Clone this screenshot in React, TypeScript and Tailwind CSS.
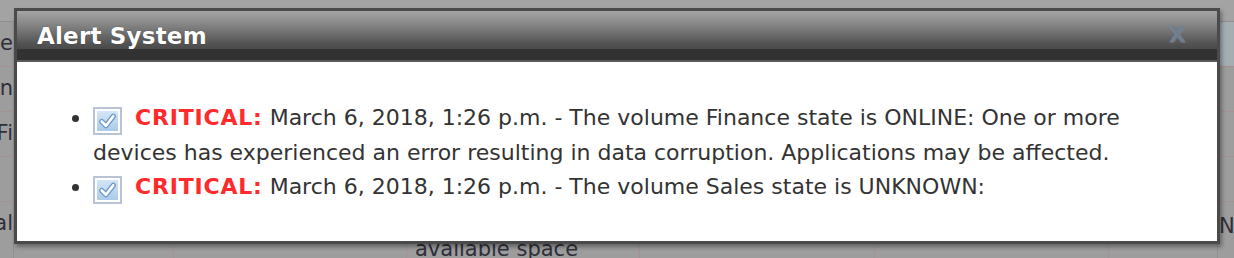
import React from 'react';

type Alert = { id: number; message: string };

const alerts: Alert[] = [
  {
    id: 1,
    message:
      'March 6, 2018, 1:26 p.m. - The volume Finance state is ONLINE: One or more devices has experienced an error resulting in data corruption. Applications may be affected.',
  },
  {
    id: 2,
    message: 'March 6, 2018, 1:26 p.m. - The volume Sales state is UNKNOWN:',
  },
];

function CheckIcon() {
  return (
    <span className="inline-flex align-[-6px] w-[29px] h-[28px] mr-[13px] border-2 border-[#b9c3d3] bg-white p-[2px]">
      <svg viewBox="0 0 20 19" className="w-full h-full">
        <defs>
          <linearGradient id="cbfill" x1="0" y1="0" x2="0" y2="1">
            <stop offset="0" stopColor="#d4e6f6" />
            <stop offset="1" stopColor="#a9cbe9" />
          </linearGradient>
        </defs>
        <rect x="0" y="0" width="20" height="19" fill="url(#cbfill)" />
        <path d="M4.5 10 L8.5 14 L15.5 5" fill="none" stroke="#6b97c6" strokeWidth="5" strokeLinecap="round" strokeLinejoin="round" />
        <path d="M4.5 10 L8.5 14 L15.5 5" fill="none" stroke="#ffffff" strokeWidth="2.6" strokeLinecap="round" strokeLinejoin="round" />
      </svg>
    </span>
  );
}

function BackgroundTable() {
  const rows = ['Name', 'Admin', 'Fi', ''];
  return (
    <div className="flex flex-col text-[21px] text-[#2f2f3a]">
      <div className="h-[22px] bg-[#a3a3a3] border-b border-[#8d8d8d]" />
      {rows.map((left, i) => (
        <div key={i} className="flex h-[45px] border-b border-[#a79090]">
          <div className="w-[14px] overflow-hidden flex justify-end items-center border-r border-[#8f8f8f] whitespace-nowrap">
            <span>{left}</span>
          </div>
          <div className="flex-1" />
          <div className={`w-[16px] border-l border-[#8f8f8f] ${i === 0 ? 'bg-[#a4aeb2]' : ''}`} />
        </div>
      ))}
      <div className="flex h-[60px]">
        <div className="w-[14px] overflow-hidden flex justify-end items-start pt-[6px] border-r border-[#8f8f8f] whitespace-nowrap">
          <span>Total</span>
        </div>
        <div className="w-[160px] border-r border-[#a79090]" />
        <div className="w-[233px] border-r border-[#a79090]" />
        <div className="w-[233px] border-r border-[#a79090] pt-[32px] pl-[8px] whitespace-nowrap">
          available space
        </div>
        <div className="w-[235px] border-r border-[#a79090]" />
        <div className="w-[234px] border-r border-[#a79090]" />
        <div className="flex-1 border-r border-[#8f8f8f]" />
        <div className="w-[16px] overflow-hidden whitespace-nowrap pt-[9px] pl-[1px]">N</div>
      </div>
    </div>
  );
}

export default function App() {
  return (
    <div
      className="relative w-[1234px] h-[258px] overflow-hidden bg-[#9d9d9d]"
      style={{ fontFamily: '"DejaVu Sans", Verdana, sans-serif' }}
    >
      <BackgroundTable />

      <div className="absolute left-[14px] top-[8px] w-[1206px] h-[236px] border-[3px] border-[#4a4a4a] bg-white shadow-[2px_3px_4px_rgba(0,0,0,0.35)] flex flex-col">
        {/* title bar */}
        <div className="h-[51px] flex flex-col">
          <div className="h-[38px] flex items-center justify-between pl-[20px] pr-[27px] bg-[linear-gradient(#a5a5a5_0%,#9a9a9a_12%,#8a8a8a_30%,#777_50%,#636363_70%,#535353_86%,#4a4a4a_100%)]">
            <span className="text-white font-bold text-[23px] tracking-[0.2px] mt-[12px] [text-shadow:0_0_1px_rgba(0,0,0,0.6)]">
              Alert System
            </span>
            <span className="text-[#6f7e92] font-bold text-[22px] mt-[9px] mr-[4px] [text-shadow:0_1px_0_rgba(255,255,255,0.15)]">
              X
            </span>
          </div>
          <div className="h-[11px] bg-[#323232]" />
          <div className="h-[2px] bg-[#5a5a5a]" />
        </div>

        {/* body */}
        <ul className="list-disc pl-[75px] pr-[20px] pt-[39px] text-[22px] leading-[34.5px] text-[#333]">
          {alerts.map((a) => (
            <li key={a.id} className="pl-[1px]">
              <CheckIcon />
              <span className="font-bold tracking-[0.8px] text-[#ff2a2a]">CRITICAL:</span> {a.message}
            </li>
          ))}
        </ul>
      </div>
    </div>
  );
}
